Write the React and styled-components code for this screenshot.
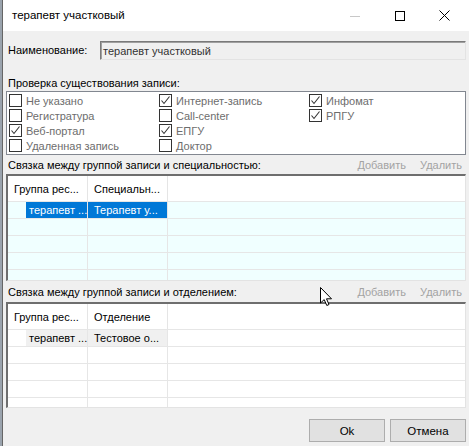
import React from 'react'
import styled, { createGlobalStyle } from 'styled-components'

const GlobalStyle = createGlobalStyle`
  html, body {
    margin: 0;
    padding: 0;
    background: #9aa3ad;
  }
  body {
    font-family: "Liberation Sans", Arial, sans-serif;
    font-size: 11px;
  }
`;

const Window = styled.div`
  position: relative;
  width: 466px;
  height: 446px;
  margin-left: 2px;
  border-left: 1px solid #666;
  background: #f0f0f0;
  display: flex;
  flex-direction: column;
  overflow: hidden;
  color: #000;
`;

const TitleBar = styled.div`
  height: 31px;
  background: #fff;
  display: flex;
  align-items: center;
  padding-left: 9px;
  padding-right: 2px;
  flex-shrink: 0;
`;

const Title = styled.div`
  flex: 1;
  font-size: 11.5px;
  padding-bottom: 1px;
`;

const Controls = styled.div`
  display: flex;
  height: 100%;
`;

const ControlBtn = styled.div`
  width: 45px;
  height: 100%;
  display: flex;
  align-items: center;
  justify-content: center;
`;

const Body = styled.div`
  flex: 1;
  display: flex;
  flex-direction: column;
  padding: 10px 3px 0 3px;
`;

const NameRow = styled.div`
  display: flex;
  align-items: center;
  height: 19px;
`;

const Label = styled.div`
  width: 92px;
  padding-left: 2px;
  line-height: 15px;
`;

const TextBox = styled.div`
  flex: 1;
  height: 19px;
  box-sizing: border-box;
  border: 1px solid #e3e3e3;
  border-top-color: #7a7a7a;
  border-left-color: #7a7a7a;
  box-shadow: inset 1px 1px 0 #a0a0a0;
  background: #f0f0f0;
  color: #333;
  padding-left: 2px;
  display: flex;
  align-items: center;
`;

const GroupLabel = styled.div`
  padding-left: 2px;
  line-height: 15px;
  margin-top: ${(p) => p.top || 0}px;
`;

const CheckList = styled.div`
  height: 64px;
  box-sizing: border-box;
  border: 1px solid #828790;
  background: #fff;
  padding: 1px 0 0 2px;
  display: grid;
  grid-template-columns: 150px 150px 150px;
  grid-template-rows: repeat(4, 15px);
  grid-auto-flow: column;
`;

const CheckItem = styled.div`
  display: flex;
  align-items: center;
  gap: 4px;
  color: #6d6d6d;
  height: 15px;
  white-space: nowrap;
`;

const Box = styled.div`
  width: 13px;
  height: 13px;
  box-sizing: border-box;
  border: 1px solid #333;
  background: #fff;
  display: flex;
  align-items: center;
  justify-content: center;
  flex-shrink: 0;
`;

const SectionHeader = styled.div`
  display: flex;
  align-items: center;
  height: ${(p) => p.h}px;
  padding: 0 4px 0 2px;
`;

const SectionTitle = styled.div`
  flex: 1;
`;

const LinkBtn = styled.div`
  color: #a3a3a3;
  margin-left: ${(p) => p.gap}px;
`;

const Grid = styled.div`
  height: ${(p) => p.h}px;
  box-sizing: border-box;
  border: 1px solid #e3e3e3;
  border-top: 2px solid #6e6e6e;
  border-left: 2px solid #6e6e6e;
  background: ${(p) => p.bg};
  overflow: hidden;
`;

const HeaderRow = styled.div`
  display: flex;
  height: 25px;
  background: #fff;
`;

const HeaderCell = styled.div`
  width: ${(p) => p.w}px;
  box-sizing: border-box;
  border-right: 1px solid #e5e5e5;
  padding-left: ${(p) => p.pad}px;
  display: flex;
  align-items: center;
  white-space: nowrap;
`;

const Row = styled.div`
  display: flex;
  height: 17px;
  box-sizing: border-box;
  border-top: 1px solid #e6e6e6;
`;

const RowHead = styled.div`
  width: 18px;
`;

const Cell = styled.div`
  width: ${(p) => p.w}px;
  box-sizing: border-box;
  border-right: 1px solid #e6e6e6;
  display: flex;
  align-items: center;
  white-space: nowrap;
  overflow: hidden;
`;

const CellFill = styled.div`
  width: 100%;
  height: 100%;
  display: flex;
  align-items: center;
  padding-left: ${(p) => p.pad}px;
  background: ${(p) => p.sel || 'transparent'};
  color: ${(p) => p.fg || '#000'};
`;

const Footer = styled.div`
  display: flex;
  justify-content: flex-end;
  gap: 5px;
  padding: 11px 0 0 0;
`;

const Button = styled.div`
  width: 76px;
  height: 23px;
  box-sizing: border-box;
  border: 1px solid #adadad;
  background: #e1e1e1;
  display: flex;
  align-items: center;
  justify-content: center;
  font-size: 11.5px;
`;

const Cursor = styled.svg`
  position: absolute;
  left: 317px;
  top: 287px;
`;

const checks = [
  ['Не указано', false],
  ['Регистратура', false],
  ['Веб-портал', true],
  ['Удаленная запись', false],
  ['Интернет-запись', true],
  ['Call-center', false],
  ['ЕПГУ', true],
  ['Доктор', false],
  ['Инфомат', true],
  ['РПГУ', true],
];

const Check = () => (
  <svg width="11" height="11" viewBox="0 0 11 11">
    <polyline points="1.5,5.5 4,8.5 9.5,1.5" fill="none" stroke="#333" strokeWidth="1.1" />
  </svg>
);

const DataGrid = ({ h, bg, col2, cells, selBg, selFg }) => (
  <Grid h={h} bg={bg}>
    <HeaderRow>
      <HeaderCell w={80} pad={6}>Группа рес...</HeaderCell>
      <HeaderCell w={80} pad={6}>{col2}</HeaderCell>
    </HeaderRow>
    {[0, 1, 2, 3, 4].map((i) => (
      <Row key={i}>
        <RowHead />
        <Cell w={62}>
          {i === 0 && <CellFill pad={3} sel={selBg} fg={selFg}>{cells[0]}</CellFill>}
        </Cell>
        <Cell w={80}>
          {i === 0 && <CellFill pad={6} sel={selBg} fg={selFg}>{cells[1]}</CellFill>}
        </Cell>
      </Row>
    ))}
  </Grid>
);

export default function App() {
  return (
    <>
      <GlobalStyle />
      <Window>
        <TitleBar>
          <Title>терапевт участковый</Title>
          <Controls>
            <ControlBtn>
              <svg width="10" height="10"><line x1="0" y1="5.5" x2="10" y2="5.5" stroke="#c8c8c8" /></svg>
            </ControlBtn>
            <ControlBtn>
              <svg width="10" height="10"><rect x="0.5" y="0.5" width="9" height="9" fill="none" stroke="#000" /></svg>
            </ControlBtn>
            <ControlBtn>
              <svg width="11" height="11">
                <line x1="0.5" y1="0.5" x2="10.5" y2="10.5" stroke="#000" />
                <line x1="10.5" y1="0.5" x2="0.5" y2="10.5" stroke="#000" />
              </svg>
            </ControlBtn>
          </Controls>
        </TitleBar>
        <Body>
          <NameRow>
            <Label>Наименование:</Label>
            <TextBox>терапевт участковый</TextBox>
          </NameRow>
          <GroupLabel top={16}>Проверка существования записи:</GroupLabel>
          <CheckList>
            {checks.map(([t, c]) => (
              <CheckItem key={t}>
                <Box>{c && <Check />}</Box>
                {t}
              </CheckItem>
            ))}
          </CheckList>
          <SectionHeader h={19}>
            <SectionTitle>Связка между группой записи и специальностью:</SectionTitle>
            <LinkBtn>Добавить</LinkBtn>
            <LinkBtn gap={14}>Удалить</LinkBtn>
          </SectionHeader>
          <DataGrid
            h={107}
            bg="#f0ffff"
            col2="Специальн..."
            cells={['терапевт ...', 'Терапевт у...']}
            selBg="#0078d7"
            selFg="#fff"
          />
          <SectionHeader h={21}>
            <SectionTitle>Связка между группой записи и отделением:</SectionTitle>
            <LinkBtn>Добавить</LinkBtn>
            <LinkBtn gap={14}>Удалить</LinkBtn>
          </SectionHeader>
          <DataGrid
            h={106}
            bg="#fff"
            col2="Отделение"
            cells={['терапевт ...', 'Тестовое о...']}
            selBg="#f0f0f0"
            selFg="#000"
          />
          <Footer>
            <Button>Ok</Button>
            <Button>Отмена</Button>
          </Footer>
        </Body>
        <Cursor width="13" height="20" viewBox="0 0 13 20">
          <path d="M0.5 0.5 L0.5 16 L4.2 12.6 L6.8 18.5 L9 17.5 L6.5 11.8 L11.5 11.8 Z" fill="#fff" stroke="#000" strokeWidth="1" />
        </Cursor>
      </Window>
    </>
  );
}
